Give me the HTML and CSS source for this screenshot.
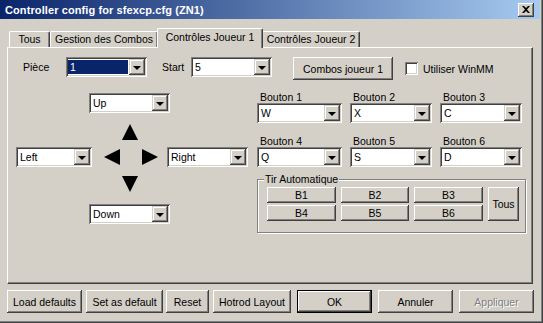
FILE: index.html
```html
<!DOCTYPE html>
<html lang="fr">
<head>
    <meta charset="UTF-8">
    <title>Controller config for sfexcp.cfg (ZN1)</title>
    <link rel="stylesheet" href="styles.css">
</head>
<body>
<div class="window">
    <!-- Barre de titre -->
    <div class="titlebar">
        <span class="title">Controller config for sfexcp.cfg (ZN1)</span>
        <span class="close">
            <svg width="8" height="7" viewBox="0 0 8 7"><path d="M0 0h2l2 2 2-2h2L5 3.5 8 7H6L4 5 2 7H0l3-3.5z" fill="#000"/></svg>
        </span>
    </div>

    <!-- Onglets -->
    <div class="tabs">
        <div class="tab tab-all">Tous</div>
        <div class="tab tab-combos">Gestion des Combos</div>
        <div class="tab tab-p1 active">Contrôles Joueur 1</div>
        <div class="tab tab-p2">Contrôles Joueur 2</div>
    </div>

    <div class="panel">
        <div class="top-row">
            <span class="lbl lbl-piece">Pièce</span>
            <div class="combo combo-piece selected"><span class="val">1</span><span class="drop"></span></div>
            <span class="lbl lbl-start">Start</span>
            <div class="combo combo-start"><span class="val">5</span><span class="drop"></span></div>
            <button class="btn btn-combos">Combos joueur 1</button>
            <label class="check"><span class="box"></span>Utiliser WinMM</label>
        </div>

        <div class="main">
            <!-- Croix directionnelle -->
            <div class="dpad">
                <div class="combo combo-dir combo-up"><span class="val">Up</span><span class="drop"></span></div>
                <span class="arrow arrow-up"></span>
                <div class="dpad-mid">
                    <div class="combo combo-left"><span class="val">Left</span><span class="drop"></span></div>
                    <span class="arrow arrow-left"></span>
                    <span class="arrow arrow-right"></span>
                    <div class="combo combo-dir"><span class="val">Right</span><span class="drop"></span></div>
                </div>
                <span class="arrow arrow-down"></span>
                <div class="combo combo-dir combo-down"><span class="val">Down</span><span class="drop"></span></div>
            </div>

            <!-- Boutons -->
            <div class="buttons">
                <div class="btn-grid">
                    <div class="field"><span class="field-lbl">Bouton 1</span><div class="combo combo-btn combo-wide"><span class="val">W</span><span class="drop"></span></div></div>
                    <div class="field"><span class="field-lbl">Bouton 2</span><div class="combo combo-btn"><span class="val">X</span><span class="drop"></span></div></div>
                    <div class="field"><span class="field-lbl">Bouton 3</span><div class="combo combo-btn"><span class="val">C</span><span class="drop"></span></div></div>
                    <div class="field row2"><span class="field-lbl">Bouton 4</span><div class="combo combo-btn combo-wide"><span class="val">Q</span><span class="drop"></span></div></div>
                    <div class="field row2"><span class="field-lbl">Bouton 5</span><div class="combo combo-btn"><span class="val">S</span><span class="drop"></span></div></div>
                    <div class="field row2"><span class="field-lbl">Bouton 6</span><div class="combo combo-btn"><span class="val">D</span><span class="drop"></span></div></div>
                </div>
                <fieldset class="group">
                    <legend>Tir Automatique</legend>
                    <div class="auto-grid">
                        <button class="btn btn-small">B1</button>
                        <button class="btn btn-small">B2</button>
                        <button class="btn btn-small">B3</button>
                        <button class="btn btn-small btn-tous">Tous</button>
                        <button class="btn btn-small">B4</button>
                        <button class="btn btn-small">B5</button>
                        <button class="btn btn-small">B6</button>
                    </div>
                </fieldset>
            </div>
        </div>
    </div>

    <!-- Boutons du bas -->
    <div class="footer">
        <button class="btn f-load">Load defaults</button>
        <button class="btn f-set">Set as default</button>
        <button class="btn f-reset">Reset</button>
        <button class="btn f-hotrod">Hotrod Layout</button>
        <button class="btn btn-default f-ok">OK</button>
        <button class="btn f-cancel">Annuler</button>
        <button class="btn f-apply" disabled>Appliquer</button>
    </div>
</div>
</body>
</html>
```

FILE: styles.css
```css
* {
    box-sizing: border-box;
}

body {
    margin: 0;
    background-color: #d4d0c8;
    font-family: "Liberation Sans", Arial, sans-serif;
    font-size: 10.5px;
    color: #000;
}

.window {
    width: 543px;
    height: 323px;
    background-color: #d4d0c8;
    border-right: 1px solid #404040;
    border-bottom: 1px solid #404040;
    box-shadow: inset -1px -1px 0 #808080;
    overflow: hidden;
}

/* Barre de titre */
.titlebar {
    height: 19px;
    margin-right: 2px;
    display: flex;
    align-items: center;
    justify-content: space-between;
    padding: 0 6px 0 5px;
    background: linear-gradient(to right, #0a246a, #a6caf0);
}

.title {
    color: #fff;
    font-weight: bold;
    font-size: 11px;
    letter-spacing: 0.1px;
}

.close {
    width: 16px;
    height: 14px;
    display: flex;
    align-items: center;
    justify-content: center;
    background-color: #d4d0c8;
    box-shadow: inset -1px -1px #404040, inset 1px 1px #fff, inset -2px -2px #808080;
}

/* Onglets */
.tabs {
    height: 19px;
    margin-top: 9px;
    padding-left: 9px;
    display: flex;
    align-items: flex-end;
}

.tab {
    height: 16px;
    line-height: 15px;
    text-align: center;
    border-top: 1px solid #fff;
    border-left: 1px solid #fff;
    border-right: 1px solid #404040;
    box-shadow: inset -1px 0 #808080;
    border-radius: 2px 2px 0 0;
    white-space: nowrap;
}

.tab-all {
    width: 41px;
}

.tab-combos {
    width: 108px;
}

.tab-p1 {
    width: 106px;
}

.tab-p2 {
    width: 98px;
}

.tab.active {
    height: 20px;
    margin: 0 -1px -1px -1px;
    line-height: 16px;
    background-color: #d4d0c8;
    position: relative;
    z-index: 1;
}

/* Panneau */
.panel {
    width: 526px;
    height: 237px;
    margin-left: 7px;
    border-top: 1px solid #fff;
    border-left: 1px solid #fff;
    border-right: 1px solid #404040;
    border-bottom: 1px solid #404040;
    box-shadow: inset -1px -1px 0 #808080;
}

.top-row {
    display: flex;
    align-items: flex-start;
    padding: 9px 0 0 15px;
}

.lbl {
    line-height: 20px;
}

.lbl-piece {
    width: 43px;
}

.lbl-start {
    width: 29px;
    margin-left: 15px;
}

/* Combobox */
.combo {
    height: 20px;
    display: flex;
    align-items: stretch;
    background-color: #fff;
    padding: 2px;
    box-shadow: inset 1px 1px #808080, inset -1px -1px #fff, inset 2px 2px #404040, inset -2px -2px #d4d0c8;
}

.combo .val {
    flex: 1;
    padding-left: 2px;
    line-height: 16px;
    white-space: nowrap;
}

.combo.selected .val {
    background-color: #0a246a;
    color: #fff;
    margin: 1px 1px 1px 0;
    line-height: 14px;
}

.drop {
    width: 16px;
    height: 16px;
    background-color: #d4d0c8;
    box-shadow: inset -1px -1px #404040, inset 1px 1px #d4d0c8, inset -2px -2px #808080, inset 2px 2px #fff;
    display: flex;
    align-items: center;
    justify-content: center;
}

.drop::after {
    content: "";
    border-left: 4px solid transparent;
    border-right: 4px solid transparent;
    border-top: 4px solid #000;
    margin-top: 1px;
}

.combo-piece {
    width: 81px;
}

.combo-start {
    width: 81px;
}

/* Boutons */
.btn {
    font-family: "Liberation Sans", Arial, sans-serif;
    font-size: 10.5px;
    color: #000;
    background-color: #d4d0c8;
    border: none;
    padding: 0;
    height: 23px;
    box-shadow: inset -1px -1px #404040, inset 1px 1px #fff, inset -2px -2px #808080, inset 2px 2px #d4d0c8;
}

.btn-combos {
    width: 100px;
    margin-left: 21px;
}

.check {
    display: flex;
    align-items: center;
    height: 23px;
    margin-left: 12px;
}

.box {
    width: 13px;
    height: 13px;
    margin-right: 5px;
    background-color: #fff;
    box-shadow: inset 1px 1px #808080, inset -1px -1px #fff, inset 2px 2px #404040, inset -2px -2px #d4d0c8;
}

.main {
    display: flex;
    margin-top: 9px;
}

/* Croix directionnelle */
.dpad {
    display: flex;
    flex-direction: column;
    align-items: flex-start;
    padding: 4px 0 0 8px;
    width: 249px;
}

.combo-dir {
    width: 81px;
}

.combo-up {
    margin-left: 73px;
}

.combo-down {
    margin-left: 73px;
    margin-top: 12px;
}

.combo-left {
    width: 76px;
}

.dpad-mid {
    display: flex;
    align-items: center;
    margin-top: 7px;
}

.arrow {
    width: 0;
    height: 0;
}

.arrow-up {
    margin: 11px 0 0 106px;
    border-left: 8px solid transparent;
    border-right: 8px solid transparent;
    border-bottom: 16px solid #000;
}

.arrow-down {
    margin: 9px 0 0 106px;
    border-left: 8px solid transparent;
    border-right: 8px solid transparent;
    border-top: 16px solid #000;
}

.arrow-left {
    margin-left: 12px;
    border-top: 8px solid transparent;
    border-bottom: 8px solid transparent;
    border-right: 16px solid #000;
}

.arrow-right {
    margin-left: 22px;
    margin-right: 9px;
    border-top: 8px solid transparent;
    border-bottom: 8px solid transparent;
    border-left: 16px solid #000;
}

/* Boutons de jeu */
.buttons {
    width: 269px;
}

.btn-grid {
    display: grid;
    grid-template-columns: 85px 82px 82px;
    column-gap: 8px;
}

.field {
    display: flex;
    flex-direction: column;
    padding-top: 2px;
}

.field.row2 {
    padding-top: 12px;
}

.field-lbl {
    line-height: 12px;
    padding-left: 3px;
}

.combo-btn {
    width: 82px;
}

.combo-wide {
    width: 85px;
}

.group {
    margin: 6px 0 0 0;
    padding: 1px 0 0 9px;
    height: 60px;
    border: 1px solid #808080;
    box-shadow: 1px 1px 0 #fff, inset 1px 1px 0 #fff;
}

.group legend {
    padding: 0 1px;
    margin-left: -3px;
    line-height: 13px;
    background-color: #d4d0c8;
}

.auto-grid {
    display: grid;
    grid-template-columns: 69px 68px 69px 31px;
    grid-template-rows: 16px 16px;
    column-gap: 5px;
    row-gap: 2px;
}

.btn-small {
    height: auto;
    line-height: 14px;
}

.btn-tous {
    grid-column: 4;
    grid-row: 1 / 3;
}

/* Pied de page */
.footer {
    display: flex;
    padding-left: 7px;
    margin-top: 6px;
}

.footer .btn {
    margin-right: 4px;
}

.f-load {
    width: 75px;
}

.f-set {
    width: 77px;
    margin-right: 3px !important;
}

.f-reset {
    width: 43px;
}

.f-hotrod {
    width: 78px;
    margin-right: 6px !important;
}

.f-ok {
    width: 75px;
    margin-right: 6px !important;
}

.f-cancel {
    width: 75px;
    margin-right: 6px !important;
}

.f-apply {
    width: 75px;
}

.btn-default {
    border: 1px solid #000;
    box-shadow: inset -1px -1px #404040, inset 1px 1px #fff, inset -2px -2px #808080;
}

.btn:disabled {
    color: #808080;
    text-shadow: 1px 1px 0 #fff;
}
```
